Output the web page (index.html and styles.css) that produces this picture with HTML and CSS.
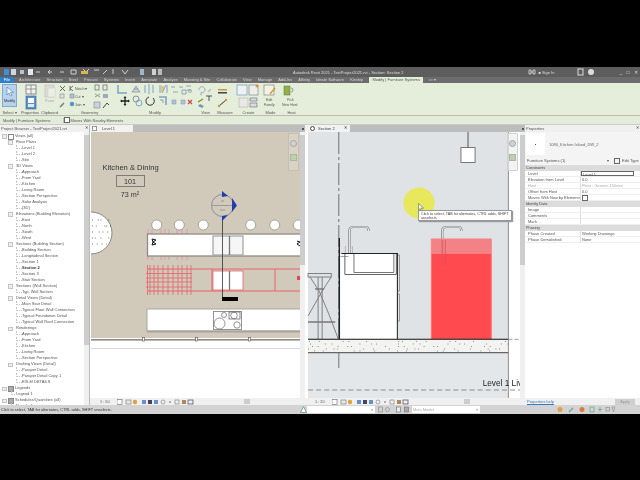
FILE: index.html
```html
<!DOCTYPE html>
<html lang="en">
<head>
    <meta charset="UTF-8">
    <meta name="viewport" content="width=device-width, initial-scale=1.0">
    <title>Autodesk Revit 2021</title>
    <link rel="stylesheet" href="styles.css">
</head>
<body>
<div class="app">
    <div class="titlebar">
        <svg class="qat" viewBox="0 67 170 10">
            <rect x="4" y="69" width="5" height="6" fill="#3f8fd8"/>
            <rect x="11" y="69" width="5" height="6" fill="#cfd6dc"/>
            <rect x="20" y="70" width="4" height="4" fill="#b8c4cc"/><rect x="28" y="69" width="5" height="6" fill="#e8e8e8"/>
            <path d="M36 72h4M48 72h4m-2-2l-2 2 2 2M60 72h4M71 70h5v4h-5zM83 69l3 3 3-3M94 70h5M103 74l4-4M113 69v5M122 70l3 4 3-4" stroke="#cfcfcf" stroke-width="1" fill="none"/>
            <rect x="81" y="71" width="7" height="3" fill="#d9b84a"/>
            <rect x="140" y="69" width="4" height="6" fill="#9fb6c8"/><rect x="152" y="69" width="4" height="6" fill="#cfcfcf"/><rect x="158" y="69" width="4" height="6" fill="#bbb"/>
        </svg>
        <span class="app-title">Autodesk Revit 2021 - TestProject2021.rvt - Section: Section 2</span>
        <div class="title-right">
            <svg class="search-icon" viewBox="0 0 8 6"><path d="M1 1h2v4H1zM5 1h2v4H5zM3 3h2" fill="none" stroke="#ddd" stroke-width=".8"/></svg>
            <span class="sign-in">&#9632; Sign In</span>
            <svg class="help-icons" viewBox="0 0 18 8"><rect x="1" y="1" width="5" height="6" fill="none" stroke="#ddd"/><circle cx="14" cy="4" r="3" fill="#ddd"/></svg>
            <span class="win-btns">_ &#9633; &#10005;</span>
        </div>
    </div>

    <div class="tabs">
        <span class="tab-file">File</span>
        <span>Architecture</span>
        <span>Structure</span>
        <span>Steel</span>
        <span>Precast</span>
        <span>Systems</span>
        <span>Insert</span>
        <span>Annotate</span>
        <span>Analyze</span>
        <span>Massing &amp; Site</span>
        <span>Collaborate</span>
        <span>View</span>
        <span>Manage</span>
        <span>Add-Ins</span>
        <span>Alfinity</span>
        <span>Ideate Software</span>
        <span>Kinship</span>
        <span class="tab-active">Modify | Furniture Systems</span>
        <span>&#9645; &#9662;</span>
    </div>

    <div class="ribbon">
        <div class="panel p-select">
            <div class="modify-btn">
                <svg class="cursor-icon" viewBox="0 0 8 10"><path d="M1 0v8l2-2 1.500 3 1.500-.6-1.500-3h3z" fill="#eef5fb" stroke="#4a7fb0" stroke-width=".6"/></svg>
                <span>Modify</span>
            </div>
            <div class="panel-label">Select &#9662;</div>
        </div>
        <div class="panel p-props">
            <svg class="panel-art" viewBox="19 84 22 26">
                <rect x="26" y="85" width="10" height="9" fill="#f2f2f2" stroke="#777" stroke-width=".8"/><path d="M26 89h10M31 85v9" stroke="#777" stroke-width=".7"/>
                <rect x="26" y="96" width="10" height="13" fill="#5f93c8" stroke="#2f5f90" stroke-width=".6"/><rect x="28" y="98" width="6" height="5" fill="#fff"/><rect x="28" y="104" width="6" height="3" fill="#dce8f2"/>
            </svg>
            <div class="panel-label">Properties</div>
        </div>
        <div class="panel p-clip">
            <svg class="panel-art" viewBox="41 84 25 26">
                <rect x="45" y="85" width="9" height="12" fill="#dcdcd6" stroke="#c4c4bc" stroke-width=".7"/><rect x="48" y="88" width="7" height="9" fill="#eeeee8" stroke="#ccc" stroke-width=".5"/>
                <text x="45" y="102" class="faded-text">Paste</text>
                <path d="M60 86l5 5m0-5l-5 5" stroke="#555" stroke-width=".9"/>
                <rect x="60" y="94" width="4" height="4" fill="#dfe3e6" stroke="#888" stroke-width=".6"/>
                <path d="M60 107l4-4" stroke="#777" stroke-width="1.400"/>
            </svg>
            <div class="panel-label">Clipboard</div>
        </div>
        <div class="panel p-geom">
            <svg class="panel-art" viewBox="66 84 47 26">
                <path d="M70 86v5m0-2.500l3-2.500m-3 2.500l3 2.500" stroke="#555" fill="none" stroke-width=".8"/><text x="75" y="90" class="rib-text">Notch &#9662;</text>
                <rect x="70" y="94" width="4" height="4" fill="#aec6dc" stroke="#777" stroke-width=".5"/><text x="75" y="98" class="rib-text">Cut &#9662;</text>
                <circle cx="72" cy="104" r="2.300" fill="#5f93c8"/><text x="75" y="106" class="rib-text">Join &#9662;</text>
                <rect x="95" y="85" width="4" height="5" fill="none" stroke="#667" stroke-width=".7"/><rect x="103" y="85" width="4" height="5" fill="none" stroke="#667" stroke-width=".7"/>
                <path d="M95 94l5 3m-5 0l5-3" stroke="#7a8" stroke-width="1"/><path d="M103 94h5v4h-5z" fill="#9ab" stroke="none"/>
                <rect x="94" y="102" width="6" height="6" fill="#c8d2da" stroke="#778" stroke-width=".5"/><path d="M103 108l4-5m0 0l2 2" stroke="#444" stroke-width="1" fill="none"/>
            </svg>
            <div class="panel-label">Geometry</div>
        </div>
        <div class="panel p-edit">
            <svg class="panel-art" viewBox="113 84 84 26">
                <path d="M118 85v8h9" stroke="#7fa3c2" stroke-width="1.500" fill="none"/>
                <path d="M132 92h8l-2-3h-4l-2 3zM134 89l2-3 2 3" fill="#cfd8de" stroke="#778" stroke-width=".6"/>
                <path d="M145 85v8M153 85v8M149 84v10" stroke="#7fa3c2" stroke-width="1" fill="none"/>
                <path d="M160 85v8M167 85v8M162 93l4-8" stroke="#7fa3c2" stroke-width="1" fill="none"/><rect x="161" y="86" width="3" height="6" fill="#d9a76a" opacity=".6"/>
                <path d="M125 97v8M121 101h8" stroke="#222" stroke-width="1.300"/><path d="M125 96l-1.500 2h3zM125 106l-1.500-2h3zM120 101l2-1.500v3zM130 101l-2-1.500v3z" fill="#222"/>
                <circle cx="136" cy="99" r="3" fill="none" stroke="#778" stroke-width=".8"/><circle cx="139" cy="103" r="3" fill="none" stroke="#7fa3c2" stroke-width="1"/>
                <path d="M153 98a4.200 4.200 0 1 1-4-1" stroke="#333" stroke-width="1" fill="none"/>
                <path d="M159 97h7v8" stroke="#7fa3c2" stroke-width="1.600" fill="none"/><path d="M160 100h3v3" stroke="#888" fill="none" stroke-width=".8"/>
                <path d="M171 87h4m4 0h4M186 86h5M173 92h5M182 90h4v4h-4zM187 90h4" stroke="#8ea6ba" stroke-width="1" fill="none"/>
                <circle cx="190" cy="91" r="1.500" fill="none" stroke="#888" stroke-width=".6"/>
                <path d="M172 100h4v4h-4zM181 100h4v4h-4z" fill="#b0c4d6" stroke="#7a96ae" stroke-width=".5"/>
                <path d="M188 100l4 4m0-4l-4 4" stroke="#c44" stroke-width="1.200"/>
            </svg>
            <div class="panel-label">Modify</div>
        </div>
        <div class="panel p-view">
            <svg class="panel-art" viewBox="197 84 17 26">
                <path d="M199 90a3 3 0 1 1 2 2.500v3" stroke="#7fa3c2" stroke-width=".8" fill="none"/><path d="M208 92l3-3" stroke="#bbb" stroke-width="1.200"/>
                <path d="M198 102l5-3" stroke="#882" stroke-width="1.300"/><path d="M206 96h6m-3 0v5" stroke="#444" stroke-width=".9"/>
                <path d="M198 106l4 2 2-2-4-2z" fill="#7a96ae"/>
            </svg>
            <div class="panel-label">View</div>
        </div>
        <div class="panel p-measure">
            <svg class="panel-art" viewBox="214 84 22 26">
                <rect x="218" y="89" width="9" height="1.500" fill="#c89a30"/><rect x="218" y="92" width="9" height="1.500" fill="#444"/>
                <path d="M219 106l7-6" stroke="#333" stroke-width="1"/><circle cx="219" cy="106" r="1.200" fill="#c89a30"/><circle cx="226" cy="100" r="1.200" fill="#c89a30"/>
            </svg>
            <div class="panel-label">Measure</div>
        </div>
        <div class="panel p-create">
            <svg class="panel-art" viewBox="236 84 25 26">
                <rect x="237" y="85" width="10" height="10" fill="#eef2f6" stroke="#7fa3c2" stroke-width=".8"/><rect x="249" y="85" width="9" height="10" fill="#eee" stroke="#888" stroke-width=".7"/><circle cx="257" cy="86" r="1.500" fill="#d9963a"/>
                <rect x="239" y="98" width="9" height="9" fill="#e8e8e4" stroke="#bbb" stroke-width=".7"/><path d="M250 98h7v3h-7zM250 103h7v4h-7z" fill="#d8dee2" stroke="#667" stroke-width=".6"/>
            </svg>
            <div class="panel-label">Create</div>
        </div>
        <div class="panel p-mode">
            <svg class="panel-art" viewBox="261 84 19 26">
                <rect x="264" y="85" width="10" height="10" fill="#f4f1e6" stroke="#888" stroke-width=".7"/><path d="M270 94l5-6" stroke="#c89a30" stroke-width="1.300"/>
                <text x="266" y="101" class="rib-text">Edit</text><text x="264" y="106" class="rib-text">Family</text>
            </svg>
            <div class="panel-label">Mode</div>
        </div>
        <div class="panel p-host">
            <svg class="panel-art" viewBox="280 84 23 26">
                <rect x="284" y="86" width="6" height="9" fill="#8fb04a" stroke="#5f7a30" stroke-width=".5"/><path d="M291 88a2 2 0 1 1 0 4" stroke="#777" fill="none" stroke-width=".7"/>
                <text x="287" y="101" class="rib-text">Pick</text><text x="282" y="106" class="rib-text">New Host</text>
            </svg>
            <div class="panel-label">Host</div>
        </div>
    </div>

    <div class="optionsbar">
        <span class="ctx">Modify | Furniture Systems</span>
        <label class="opt"><span class="checkbox"></span>Moves With Nearby Elements</label>
    </div>

    <div class="main">
        <div class="browser">
            <div class="pane-head">Project Browser - TestProject2021.rvt <b>&#10005;</b></div>
            <div class="tree-wrap">
                <div class="tree">
                    <div class="t0 open icon-views">Views (all)</div>
                    <div class="t1 open">Floor Plans</div>
                    <div class="t2">Level 1</div>
                    <div class="t2">Level 2</div>
                    <div class="t2">Site</div>
                    <div class="t1 open">3D Views</div>
                    <div class="t2">Approach</div>
                    <div class="t2">From Yard</div>
                    <div class="t2">Kitchen</div>
                    <div class="t2">Living Room</div>
                    <div class="t2">Section Perspective</div>
                    <div class="t2">Solar Analysis</div>
                    <div class="t2">{3D}</div>
                    <div class="t1 open">Elevations (Building Elevation)</div>
                    <div class="t2">East</div>
                    <div class="t2">North</div>
                    <div class="t2">South</div>
                    <div class="t2">West</div>
                    <div class="t1 open">Sections (Building Section)</div>
                    <div class="t2">Building Section</div>
                    <div class="t2">Longitudinal Section</div>
                    <div class="t2">Section 1</div>
                    <div class="t2 current">Section 2</div>
                    <div class="t2">Section 3</div>
                    <div class="t2">Stair Section</div>
                    <div class="t1 open">Sections (Wall Section)</div>
                    <div class="t2">Typ. Wall Section</div>
                    <div class="t1 open">Detail Views (Detail)</div>
                    <div class="t2">Main Stair Detail</div>
                    <div class="t2">Typical Floor Wall Connection</div>
                    <div class="t2">Typical Foundation Detail</div>
                    <div class="t2">Typical Wall Roof Connection</div>
                    <div class="t1 open">Renderings</div>
                    <div class="t2">Approach</div>
                    <div class="t2">From Yard</div>
                    <div class="t2">Kitchen</div>
                    <div class="t2">Living Room</div>
                    <div class="t2">Section Perspective</div>
                    <div class="t1 open">Drafting Views (Detail)</div>
                    <div class="t2">Parapet Detail</div>
                    <div class="t2">Parapet Detail Copy 1</div>
                    <div class="t2">EXLM DETAILS</div>
                    <div class="t0 open icon-sheet">Legends</div>
                    <div class="t2 t-short">Legend 1</div>
                    <div class="t0 open icon-sheet">Schedules/Quantities (all)</div>
                    <div class="t2 t-short">Now do 1</div>
                </div>
                <div class="vscroll tree-scroll"><div class="thumb"></div></div>
            </div>
        </div>

        <div class="view view-plan">
            <div class="view-tab-row"><span class="view-tab"><i class="tab-ico"></i>Level 1</span><span class="tab-fill"></span></div>
            <div class="view-body">
                <svg class="drawing" viewBox="90 132 210 266" preserveAspectRatio="none">
                    <defs><clipPath id="planClip"><rect x="91" y="132" width="209" height="266"/></clipPath></defs>
                    <g clip-path="url(#planClip)">
                        <rect x="90" y="132" width="210" height="206" fill="#d1cabb"/>
                        <rect x="90" y="338" width="210" height="60" fill="#fff"/>
                        <text x="102.500" y="170" class="room-name">Kitchen &amp; Dining</text>
                        <rect x="116.500" y="175.500" width="28" height="11" fill="none" stroke="#807c74"/>
                        <text x="130" y="183.500" class="room-no">101</text>
                        <text x="130" y="197" class="room-no">73 m²</text>

                        <circle cx="91" cy="233" r="21" fill="#fff" stroke="#8a8a84"/>
                        <g stroke="#222" stroke-width=".8" fill="none">
                            <path d="M92 220h20" stroke-dasharray=".8 5 .8 2 .8 7"/><path d="M92 226h20" stroke-dasharray=".8 3 .8 8 .8 1"/><path d="M92 232h20" stroke-dasharray=".8 6 .8 3 .8 4"/><path d="M92 238h18" stroke-dasharray=".8 2 .8 5 .8 7"/><path d="M92 244h15" stroke-dasharray=".8 4 .8 4"/>
                        </g>
                        <g fill="#fff" stroke="#8e8a80" stroke-width=".7">
                            <circle cx="156.700" cy="225" r="5"/><circle cx="179.300" cy="225" r="5"/><circle cx="203.300" cy="225" r="5"/><circle cx="250.700" cy="225" r="5"/><circle cx="274.700" cy="225" r="5"/><circle cx="298.300" cy="225" r="5"/>
                        </g>

                        <path d="M148 229v5M152 229v5M161 229v5M165 229v5M169 229v5M177 229v5M182 229v5M187 229v5M148 256v4M152 256v4M161 256v4M165 256v4M169 256v4M177 256v4M182 256v4M187 256v4" stroke="#e98aa8" stroke-width=".8"/>
                        <rect x="147.500" y="234" width="160" height="22" fill="#fff" stroke="#8f8b83" stroke-width="1.300"/>
                        <rect x="213" y="236" width="30" height="19" fill="#f6f6f6" stroke="#a2a2a2" stroke-width="1.200"/><path d="M229.500 236v19" stroke="#777" stroke-width="1.300"/>
                        <path d="M152 239l4 1-3 2 3 2-4 1 1-3z" fill="none" stroke="#111" stroke-width="1"/>
                        <path d="M297 241l3 1-3 2 3 2" fill="none" stroke="#111" stroke-width="1"/>

                        <g stroke="#e8626a" stroke-width=".8">
                            <path d="M147.500 265v30M150 265v30M154 265v30M158 265v30M163 265v30M168 265v30M173 265v30M178 265v30M182 265v30M187 265v30M191 265v30"/>
                            <path d="M146 273.500h46M146 278h46M146 282h46M146 287h46"/>
                        </g>
                        <path d="M147 269h160M147 291h160M212 269v22M275 269v22" stroke="#e8626a" stroke-width="1" fill="none"/>
                        <rect x="213" y="271" width="30" height="19" fill="#fff" stroke="#e8626a" stroke-width=".8"/><path d="M229.500 271v19" stroke="#777" stroke-width="1.300"/>
                        <path d="M222.500 216v81" stroke="#333" stroke-width=".8"/>
                        <rect x="222" y="297" width="16" height="4" fill="#000"/>
                        <path d="M297 276h3v4h-3z" fill="#e8445a"/>

                        <rect x="147" y="309" width="160" height="22" fill="#fff" stroke="#aaa6a0" stroke-width="1"/>
                        <path d="M147 331.500h160" stroke="#a8a49c" stroke-width="2"/>
                        <rect x="213.500" y="311.500" width="28" height="18" fill="#fff" stroke="#888" stroke-width=".9"/>
                        <rect x="229" y="312" width="11" height="7" fill="none" stroke="#555" stroke-width=".7"/>
                        <g fill="none" stroke="#666" stroke-width=".7">
                            <circle cx="224" cy="315" r="2.500"/><circle cx="234" cy="315.500" r="3.300"/><circle cx="219.500" cy="323.500" r="5.500"/><circle cx="237" cy="325" r="3.200"/>
                        </g>

                        <rect x="90" y="339" width="210" height="1.600" fill="#8c8a84"/>
                        <g fill="#fff" stroke="#666" stroke-width=".7"><rect x="142.500" y="337.500" width="2" height="3.500"/><rect x="195.500" y="337.500" width="2" height="3.500"/><rect x="248.500" y="337.500" width="2" height="3.500"/></g>
                        <rect x="90" y="348" width="210" height="1" fill="#d8d8d8"/>

                        <circle cx="222.500" cy="205.500" r="11" fill="none" stroke="#8187a2" stroke-width=".9"/>
                        <path d="M212 205.500h21M221 201h3M220 210h5" stroke="#77798a" stroke-width=".6"/>
                        <path d="M222 191l6 5-6 1zM232 198l5 7.500-5 6.500zM222 221v-5l6-1z" fill="#1f3fb0"/>
                    </g>
                </svg>
                <div class="nav-wheel"><span></span><span class="green"></span></div>
                <div class="vscroll"><div class="thumb thumb-plan"></div></div>
            </div>
            <div class="view-foot">
                <span class="scale">1 : 50</span>
                <svg class="view-ctrl" viewBox="0 0 78 6">
                    <rect x="0" y=".5" width="5" height="5" fill="#fff" stroke="#667" stroke-width=".6"/><rect x="9" y="1" width="5" height="4" fill="#e8e8e8" stroke="#777" stroke-width=".6"/><circle cx="18" cy="3" r="2.200" fill="#e0a040"/><rect x="25" y="1" width="4" height="4" fill="#6a8fc8"/><rect x="31" y="1" width="4" height="4" fill="#446"/><rect x="37" y="1" width="4" height="4" fill="#6a8fc8"/><circle cx="46" cy="3" r="2" fill="none" stroke="#777" stroke-width=".6"/><circle cx="53" cy="3" r="1" fill="#999"/><rect x="58" y="1" width="4" height="4" fill="none" stroke="#777" stroke-width=".6"/><rect x="65" y="1" width="4" height="4" fill="#a86"/><rect x="71" y="1" width="5" height="4" fill="none" stroke="#445" stroke-width=".7"/>
                </svg>
                <div class="hscroll hscroll-plan"><div class="thumb"></div></div>
            </div>
        </div>

        <div class="view view-section">
            <div class="view-tab-row"><span class="view-tab"><i class="tab-ico round"></i>Section 2 <b>&#10005;</b></span><span class="tab-fill"></span></div>
            <div class="view-body">
                <svg class="drawing" viewBox="305 132 213 266" preserveAspectRatio="none">
                    <rect x="305" y="132" width="213" height="266" fill="#fff"/>
                    <rect x="308" y="132" width="198.500" height="266" fill="#dfe3e6"/>
                    <path d="M308 353h198.500v45H308z" fill="#e4e7e9"/>

                    <path d="M338.500 132v236" stroke="#555" stroke-width=".8" stroke-dasharray="22 3 3 3"/>
                    <path d="M466.500 132v15" stroke="#555"/>
                    <rect x="459.500" y="147.500" width="14" height="15" fill="#fff" stroke="#777"/>

                    <rect x="340" y="254" width="56.500" height="85" fill="#fff"/>
                    <rect x="396.500" y="294" width="2" height="27" fill="#dfe3e6" stroke="#666" stroke-width=".6"/>
                    <rect x="396.500" y="255" width="2" height="36" fill="#dfe3e6" stroke="#666" stroke-width=".6"/>
                    <path d="M339 238v101" stroke="#222" stroke-width="1.400"/>
                    <path d="M341 253.500h56" stroke="#222" stroke-width="1.200"/>
                    <path d="M396.500 253v86" stroke="#222" stroke-width="1"/>
                    <path d="M344.500 254v20.500h51V254" fill="none" stroke="#555" stroke-width=".9"/>
                    <path d="M353.500 254v18.500h39.500V254" fill="none" stroke="#555" stroke-width=".8"/>
                    <path d="M340 256.500h8" stroke="#777" stroke-width=".7"/>
                    <path d="M349 253v-22q0-4 4-4h12q3 0 3 4" fill="none" stroke="#777" stroke-width="2.200"/>
                    <path d="M349 253v-22q0-4 4-4h12q3 0 3 4" fill="none" stroke="#eceff1" stroke-width="1"/>
                    <path d="M345 253v-7M352 253v-7" stroke="#888" stroke-width=".5"/>

                    <path d="M441 253v-22q0-4 4-4h12q3 0 3 4" fill="none" stroke="#777" stroke-width="2.200"/>
                    <path d="M441 253v-22q0-4 4-4h12q3 0 3 4" fill="none" stroke="#eceff1" stroke-width="1"/>
                    <rect x="430" y="238.500" width="60" height="15" fill="#f4777b" opacity=".9"/>
                    <rect x="430" y="253.500" width="60" height="85.500" fill="#ff4a50"/>
                    <path d="M441 240v25M444 240v25" stroke="#d85058" stroke-width=".7"/>
                    <path d="M430 338V239M489.500 338V239" stroke="#f88" stroke-width=".8"/>

                    <g stroke="#777" fill="none">
                        <rect x="308" y="273.500" width="23" height="3.500" fill="#dfe3e6" stroke-width=".9"/>
                        <path d="M318 277v62M322 277v62" stroke-width=".9"/>
                        <path d="M331 277l-9 14-5 9-9 16M310 277l9 14 10 24 9 24" stroke-width=".9"/>
                        <path d="M315 289h9" stroke-width="1.500"/>
                        <path d="M308 322h27" stroke-width="1.500"/>
                    </g>

                    <rect x="308" y="339" width="198.500" height="14" fill="#f3f3f1"/>
                    <path d="M308 339.300h198.500" stroke="#111" stroke-width="1"/>
                    <path d="M308 352.700h198.500" stroke="#666" stroke-width="1.200"/>
                    <path d="M506.500 339.300H518" stroke="#777" stroke-width=".7" stroke-dasharray="4 2"/>
                    <g stroke="#222" stroke-width=".7" fill="none">
                        <path d="M309 341.500h198" stroke-dasharray=".7 9 .7 23 .7 5 .7 17 .7 31 .7 3 .7 13"/>
                        <path d="M310 344h198" stroke-dasharray=".7 14 .7 6 .7 27 .7 11 .7 4 .7 21"/>
                        <path d="M312 346.500h194" stroke-dasharray=".7 5 .7 19 .7 9 .7 3 .7 33 .7 12"/>
                        <path d="M308 349h198" stroke-dasharray=".7 17 .7 7 .7 3 .7 25 .7 9 .7 15"/>
                        <path d="M314 351h192" stroke-dasharray=".7 8 .7 30 .7 5 .7 14 .7 22"/>
                    </g>

                    <path d="M506.500 132v266" stroke="#777" stroke-width=".8"/>
                    <path d="M308 390h210" stroke="#777" stroke-width=".8" stroke-dasharray="5 3"/>
                    <text x="481" y="386" class="level-text">Level 1 Liv</text>

                    <circle cx="418" cy="203" r="15.500" fill="#e7e85c"/>
                </svg>
                <div class="nav-wheel nav-wheel-section"><span></span><span class="green"></span></div>
                <div class="tooltip">Click to select, TAB for alternates, CTRL adds, SHIFT unselects.</div>
                <svg class="pointer" viewBox="0 0 6 9"><path d="M.5.500v6.500l1.600-1.500 1 2.500 1.200-.5-1-2.400h2.200z" fill="#f4f4f4" stroke="#555" stroke-width=".5"/></svg>
                <div class="vscroll"><div class="thumb thumb-section"></div></div>
            </div>
            <div class="view-foot">
                <span class="scale">1 : 20</span>
                <svg class="view-ctrl" viewBox="0 0 78 6">
                    <rect x="0" y=".5" width="5" height="5" fill="#fff" stroke="#667" stroke-width=".6"/><rect x="9" y="1" width="5" height="4" fill="#e8e8e8" stroke="#777" stroke-width=".6"/><circle cx="18" cy="3" r="2.200" fill="#e0a040"/><rect x="25" y="1" width="4" height="4" fill="#6a8fc8"/><rect x="31" y="1" width="4" height="4" fill="#446"/><rect x="37" y="1" width="4" height="4" fill="#6a8fc8"/><circle cx="46" cy="3" r="2" fill="none" stroke="#777" stroke-width=".6"/><circle cx="53" cy="3" r="1" fill="#999"/><rect x="58" y="1" width="4" height="4" fill="none" stroke="#777" stroke-width=".6"/><rect x="65" y="1" width="4" height="4" fill="#a86"/><rect x="71" y="1" width="5" height="4" fill="none" stroke="#445" stroke-width=".7"/>
                </svg>
                <div class="hscroll hscroll-section"><div class="thumb"></div></div>
            </div>
        </div>

        <div class="props">
            <div class="pane-head">Properties <b>&#10005;</b></div>
            <div class="type-row">
                <div class="type-thumb"><i></i></div>
                <span>1080_Kitchen Island_DW_2</span>
            </div>
            <div class="filter-row">
                <span class="filter-box">Furniture Systems (1) <em>&#9662;</em></span>
                <span class="edit-type"><i></i>Edit Type</span>
            </div>
            <div class="prop-group">Constraints</div>
            <div class="prop"><span>Level</span><span class="input">Level 1</span></div>
            <div class="prop"><span>Elevation from Level</span><span>0.0</span></div>
            <div class="prop muted"><span>Host</span><span>Floor : Generic 150mm</span></div>
            <div class="prop"><span>Offset from Host</span><span>0.0</span></div>
            <div class="prop"><span>Moves With Nearby Elements</span><span><i class="checkbox"></i></span></div>
            <div class="prop-group">Identity Data</div>
            <div class="prop"><span>Image</span><span></span></div>
            <div class="prop"><span>Comments</span><span></span></div>
            <div class="prop"><span>Mark</span><span></span></div>
            <div class="prop-group">Phasing</div>
            <div class="prop"><span>Phase Created</span><span>Working Drawings</span></div>
            <div class="prop"><span>Phase Demolished</span><span>None</span></div>
            <div class="props-space"></div>
            <div class="props-foot"><a href="#">Properties help</a><button>Apply</button></div>
        </div>
    </div>

    <div class="statusbar">
        <span class="status-text">Click to select, TAB for alternates, CTRL adds, SHIFT unselects.</span>
        <svg class="warn" viewBox="0 0 7 7"><path d="M3.500.5l3 6h-6z" fill="#fff" stroke="#4a8a8a" stroke-width=".7"/></svg>
        <span class="combo workset"><em>&#9662;</em></span>
        <svg class="status-mid" viewBox="0 0 34 7"><rect x="2" y="1" width="4" height="5" fill="none" stroke="#888" stroke-width=".6"/><circle cx="11" cy="3.500" r="2" fill="none" stroke="#888" stroke-width=".6"/><rect x="20" y="1" width="4" height="5" fill="#eee" stroke="#666" stroke-width=".6"/><rect x="28" y="1" width="4" height="5" fill="#aaa" stroke="#666" stroke-width=".5"/></svg>
        <span class="combo model">Main Model<em>&#9662;</em></span>
        <svg class="status-right" viewBox="0 0 58 7"><circle cx="3" cy="3.500" r="2.500" fill="#e0a040"/><path d="M12 6l4-4" stroke="#6a9" stroke-width="1.200"/><circle cx="25" cy="3.500" r="2.500" fill="#d87a40"/><rect x="33" y="1" width="4" height="5" fill="none" stroke="#6a8" stroke-width=".7"/><path d="M43 1v5M41 3.500h4" stroke="#6a9" stroke-width=".8"/><rect x="49" y="1.500" width="3.500" height="3.500" fill="none" stroke="#888" stroke-width=".6"/><path d="M55 1h3l-1.500 5z" fill="none" stroke="#888" stroke-width=".6"/></svg>
    </div>
</div>
</body>
</html>
```
FILE: styles.css
```css
html, body {
    margin: 0;
    height: 100%;
    background-color: #000;
    overflow: hidden;
}
.app {
    margin-top: 67px;
    height: 347px;
    width: 640px;
    display: flex;
    flex-direction: column;
    font-family: "Liberation Sans", Arial, sans-serif;
    font-size: 4px;
    color: #555;
    background-color: #f0f0f0;
    filter: blur(0.45px);
}

/* top bars */
.titlebar {
    height: 10px;
    background-color: #5d5d5d;
    color: #ddd;
    display: flex;
    align-items: center;
    position: relative;
    font-size: 4px;
}
.qat {
    width: 170px;
    height: 10px;
}
.app-title {
    margin-left: 123px;
}
.title-right {
    margin-left: auto;
    display: flex;
    align-items: center;
    padding-right: 2px;
    font-size: 4px;
}
.search-icon {
    width: 8px;
    height: 6px;
    margin-right: 2px;
}
.sign-in {
    width: 39px;
}
.help-icons {
    width: 18px;
    height: 8px;
}
.win-btns {
    font-size: 5px;
    margin-left: 24px;
    word-spacing: 3px;
}
.tabs {
    height: 6px;
    background-color: #6c6c6c;
    color: #d4d4d4;
    display: flex;
    align-items: center;
    gap: 6.100px;
    line-height: 6px;
}
.tab-file {
    background-color: #2c7fc8;
    color: #fff;
    width: 14px;
    margin-right: -1px;
    text-align: center;
}
.tab-active {
    background-color: #e4edd9;
    color: #555;
    padding: 0 3px;
}
.ribbon {
    height: 33px;
    background-color: #e5eddb;
    border-bottom: 1px solid #b8bdb0;
    display: flex;
    box-sizing: border-box;
}
.panel {
    display: flex;
    flex-direction: column;
    height: 32px;
}
.panel-art {
    height: 26px;
    margin-top: 1px;
}
.panel-label {
    text-align: center;
    font-size: 4px;
    line-height: 5px;
}
.p-select { width: 19px; }
.p-props { width: 22px; }
.p-clip { width: 25px; }
.p-geom { width: 47px; }
.p-edit { width: 84px; }
.p-view { width: 17px; }
.p-measure { width: 22px; }
.p-create { width: 25px; }
.p-mode { width: 19px; }
.p-host { width: 23px; }
.p-clip .panel-label { padding-right: 8px; }
.modify-btn {
    margin: 1px 2px 0;
    height: 23px;
    margin-bottom: 3px;
    background-color: #b7d2ec;
    border: 1px solid #7fa9d2;
    box-sizing: border-box;
    display: flex;
    flex-direction: column;
    align-items: center;
    padding-top: 2px;
    font-size: 3.8px;
    color: #333;
}
.cursor-icon {
    width: 8px;
    height: 10px;
    margin-bottom: 2px;
}
.rib-text {
    font-size: 3.6px;
    fill: #555;
}
.faded-text {
    font-size: 3.6px;
    fill: #aaa;
}
.optionsbar {
    background-color: #e3ecd8;
    border-bottom: 1px solid #c9cfc2;
    display: flex;
    align-items: center;
    height: 8px;
}
.ctx {
    width: 60px;
    padding-left: 3px;
    border-right: 1px solid #bbb;
}
.opt {
    display: flex;
    align-items: center;
    gap: 1px;
}
.checkbox {
    display: inline-block;
    width: 3.500px;
    height: 3.500px;
    background-color: #fff;
    border: 0.5px solid #666;
}

/* main area */
.main {
    flex: 1;
    display: flex;
    min-height: 0;
}
.pane-head {
    height: 7px;
    line-height: 7px;
    padding-left: 1px;
    background-color: #f0f0f0;
    display: flex;
    justify-content: space-between;
    padding-right: 1px;
    flex: none;
}
.pane-head b {
    font-size: 3.500px;
}
.browser {
    width: 90px;
    flex: none;
    display: flex;
    flex-direction: column;
    border-right: 1px solid #bbb;
    box-sizing: border-box;
}
.tree-wrap {
    flex: 1;
    display: flex;
    background-color: #fff;
    overflow: hidden;
    min-height: 0;
}
.tree {
    flex: 1;
    overflow: hidden;
    padding-top: 0.500px;
}
.tree div {
    height: 6.030px;
    line-height: 6px;
    white-space: nowrap;
    position: relative;
    box-sizing: border-box;
}
.t0 { padding-left: 15px; }
.t1 { padding-left: 16px; }
.t2 { padding-left: 22px; }
.t-short { padding-left: 16px !important; }
.current {
    font-weight: bold;
    color: #333;
}
/* dotted branch in front of the tree rows */
.t2::before {
    content: "";
    position: absolute;
    left: 16px;
    top: 0;
    width: 5px;
    height: 3px;
    border-left: 0.5px dotted #c4c4c4;
    border-bottom: 0.5px dotted #c4c4c4;
}
.t-short::before {
    left: 11px;
}
.open::before {
    content: "";
    position: absolute;
    top: 1.500px;
    width: 2.500px;
    height: 2.500px;
    background-color: #eee;
    border: 0.5px solid #c4c4c4;
}
.t0.open::before { left: 2px; }
.t1.open::before { left: 8px; }
.icon-views::after, .icon-sheet::after {
    content: "";
    position: absolute;
    left: 8px;
    top: 1px;
    width: 4px;
    height: 4px;
    border: 0.5px solid #888;
}
.icon-sheet::after {
    background-color: #aaa;
}
.vscroll {
    width: 5px;
    flex: none;
    background-color: #f0f0f0;
    position: relative;
}
.thumb {
    background-color: #cdcdcd;
}
.tree-scroll .thumb {
    height: 210px;
    margin-top: 3px;
}
.view {
    display: flex;
    flex-direction: column;
    flex: none;
    box-sizing: border-box;
}
.view-plan { width: 215px; }
.view-section { width: 220px; }
.view-tab-row {
    height: 7px;
    display: flex;
    background-color: #bdbdbd;
    flex: none;
}
.view-tab {
    background-color: #f2f2f2;
    line-height: 7px;
    padding: 0 2px;
    display: flex;
    align-items: center;
    gap: 5px;
    color: #444;
    white-space: nowrap;
    flex: none;
}
.view-plan .view-tab { width: 39px; }
.view-section .view-tab {
    width: 38px;
    padding-left: 5px;
    gap: 3px;
}
.view-tab b {
    font-size: 3.500px;
    margin-left: 6px;
}
.tab-fill {
    flex: 1;
    display: flex;
    justify-content: flex-end;
    align-items: center;
    padding-right: 1px;
}
.tab-fill::after {
    content: "";
    width: 2px;
    height: 2px;
    background-color: #555;
}
.tab-ico {
    width: 3px;
    height: 3px;
    border: 0.5px solid #999;
    background-color: #fff;
}
.tab-ico.round {
    border-radius: 50%;
    border-color: #444;
}
.view-body {
    flex: 1;
    display: flex;
    position: relative;
    min-height: 0;
}
.drawing {
    flex: 1;
    min-width: 0;
    height: 100%;
    display: block;
}
.view-plan .drawing { width: 210px; }
.view-plan .view-body { background-color: #fff; }
.room-name {
    font-size: 7.600px;
    fill: #333;
    font-family: "Liberation Sans", Arial, sans-serif;
}
.room-no {
    font-size: 7.200px;
    fill: #333;
    text-anchor: middle;
    font-family: "Liberation Sans", Arial, sans-serif;
}
.level-text {
    font-size: 8.200px;
    fill: #222;
    font-family: "Liberation Sans", Arial, sans-serif;
}
.thumb-plan, .thumb-section {
    height: 130px;
    margin-top: 3px;
}
.nav-wheel {
    position: absolute;
    left: 198px;
    top: 1px;
    width: 11px;
    height: 38px;
    box-sizing: border-box;
    border: 1px solid #c4bfb2;
    background-color: rgba(220, 216, 204, 0.6);
    border-radius: 1px;
    display: flex;
    flex-direction: column;
    align-items: center;
    gap: 7px;
    padding-top: 6px;
}
.nav-wheel-section {
    left: 201.500px;
    background-color: rgba(236, 238, 238, 0.7);
    border-color: #d0d2d2;
}
.nav-wheel span {
    width: 5px;
    height: 5px;
    border-radius: 50%;
    background-color: #cfd2d6;
    border: 0.5px solid #a4a4a4;
}
.nav-wheel .green {
    border-radius: 0;
    background-color: #bdd0b2;
    border-color: #a8b8a0;
}
.tooltip {
    position: absolute;
    left: 113px;
    top: 78px;
    width: 94px;
    height: 11px;
    box-sizing: border-box;
    padding: 1px 2px;
    background-color: #fff;
    border: 0.5px solid #999;
    box-shadow: 1px 1px 1px #999;
    font-size: 3.700px;
    line-height: 4.200px;
    color: #444;
}
.pointer {
    position: absolute;
    left: 112.500px;
    top: 71px;
    width: 6px;
    height: 9px;
}
.view-foot {
    height: 7px;
    flex: none;
    background-color: #f0f0f0;
    display: flex;
    align-items: center;
}
.scale {
    width: 27px;
    padding-left: 10px;
    box-sizing: border-box;
    font-size: 3.800px;
}
.view-ctrl {
    width: 78px;
    height: 6px;
}
.hscroll {
    flex: 1;
    height: 5px;
    margin-right: 5px;
    position: relative;
}
.hscroll .thumb {
    height: 5px;
    width: 6px;
}
.hscroll-plan .thumb { margin-left: 49px; }
.hscroll-section .thumb { margin-left: 54px; }

/* properties */
.props {
    flex: 1;
    display: flex;
    flex-direction: column;
    background-color: #fff;
    min-width: 0;
}
.type-row {
    height: 24px;
    display: flex;
    align-items: center;
    gap: 4px;
    padding-left: 1px;
    background-color: #f4f4f4;
    flex: none;
    color: #666;
}
.type-thumb {
    width: 19px;
    height: 22px;
    background-color: #fff;
    display: flex;
    align-items: center;
    justify-content: center;
}
.type-thumb i {
    width: 1px;
    height: 1px;
    background-color: #555;
}
.filter-row {
    height: 9px;
    display: flex;
    align-items: center;
    background-color: #f4f4f4;
    flex: none;
}
.filter-box {
    width: 86px;
    padding-left: 2px;
    box-sizing: border-box;
    display: flex;
    justify-content: space-between;
    margin-right: 3px;
}
.filter-box em, .combo em {
    font-style: normal;
    padding-right: 2px;
}
.edit-type {
    display: flex;
    align-items: center;
    gap: 2px;
}
.edit-type i {
    width: 4px;
    height: 4px;
    border: 0.5px solid #666;
}
.prop-group {
    height: 6px;
    line-height: 6px;
    background-color: #dcdcdc;
    padding-left: 1px;
    color: #444;
    font-size: 3.800px;
    flex: none;
}
.prop {
    height: 6px;
    line-height: 6px;
    display: flex;
    flex: none;
    border-bottom: 0.5px solid #eee;
    box-sizing: border-box;
    white-space: nowrap;
}
.prop span:first-child {
    width: 56px;
    padding-left: 3px;
    box-sizing: border-box;
    border-right: 0.5px solid #ddd;
    overflow: hidden;
}
.prop span:last-child {
    padding-left: 1px;
}
.prop .input {
    flex: none;
    width: 53px;
    border: 0.5px solid #666;
    box-sizing: border-box;
    line-height: 5px;
}
.muted {
    color: #aaa;
}
.props-space {
    flex: 1;
}
.props-foot {
    height: 7px;
    flex: none;
    background-color: #f0f0f0;
    display: flex;
    align-items: center;
    justify-content: space-between;
    padding: 0 5px 0 2px;
}
.props-foot a {
    color: #3a78c0;
    text-decoration: underline;
}
.props-foot button {
    width: 20px;
    height: 6px;
    padding: 0;
    border: 0;
    background-color: #cfcfcf;
    color: #999;
    font-family: inherit;
    font-size: 3.800px;
}

/* bottom */
.statusbar {
    height: 9px;
    background-color: #d3d3d3;
    display: flex;
    align-items: center;
    flex: none;
    color: #333;
}
.status-text {
    width: 300px;
    padding-left: 1px;
    box-sizing: border-box;
    font-size: 3.900px;
}
.warn {
    width: 7px;
    height: 7px;
}
.combo {
    background-color: #fff;
    height: 7px;
    line-height: 7px;
    display: flex;
    justify-content: flex-end;
    color: #aaa;
    box-sizing: border-box;
}
.workset { width: 68px; }
.model {
    width: 68px;
    padding-left: 1px;
    justify-content: space-between;
}
.status-mid {
    width: 37px;
    height: 7px;
}
.status-right {
    width: 58px;
    height: 7px;
    margin-left: 77px;
}
```
